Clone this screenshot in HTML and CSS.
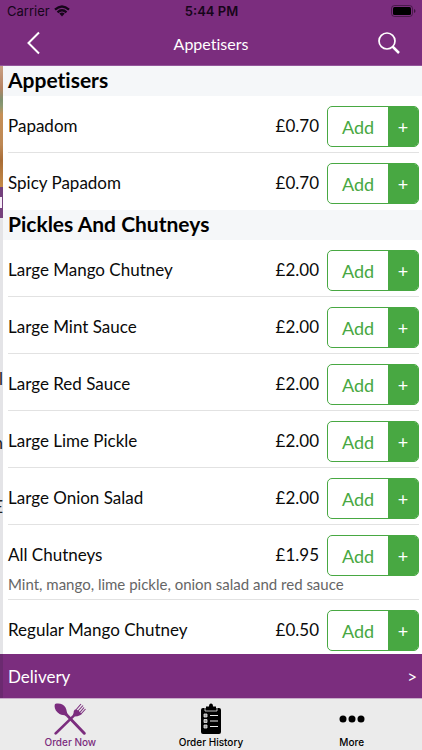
FILE: index.html
```html
<!DOCTYPE html>
<html lang="en">
<head>
<meta charset="utf-8">
<meta name="viewport" content="width=device-width, initial-scale=1">
<title>Appetisers</title>
<link rel="stylesheet" href="styles.css">
</head>
<body>
<header class="top">
  <div class="status">
    <span class="carrier">Carrier
      <svg class="wifi" viewBox="0 0 16 12" width="16" height="12" aria-hidden="true"><g fill="none" stroke="currentColor" stroke-width="2.3"><path d="M1 4.7Q8-1.7 15 4.7"/><path d="M3.5 7.3Q8 3.2 12.500 7.300"/></g><path fill="currentColor" d="M5.300 8.600Q8 6.600 10.700 8.600L8 11.500z"/></svg>
    </span>
    <span class="clock">5:44 PM</span>
    <svg class="battery" viewBox="0 0 25 12" width="25" height="12" aria-hidden="true"><rect x=".5" y=".5" width="21" height="11" rx="3" fill="none" stroke="#000" opacity=".4"/><rect x="2" y="2" width="18" height="8" rx="1.500" fill="#000"/><path d="M23 4v4q1.500-.5 1.500-2T23 4z" fill="#000" opacity=".5"/></svg>
  </div>
  <div class="nav">
    <button class="icon-button" type="button" aria-label="Back"><svg viewBox="0 0 14 24" width="14" height="24"><path d="M13 1.500 2.500 12 13 22.500" fill="none" stroke="#fff" stroke-width="2"/></svg></button>
    <h1>Appetisers</h1>
    <button class="icon-button" type="button" aria-label="Search"><svg viewBox="0 0 22 22" width="22" height="22"><circle cx="9" cy="9" r="8" fill="none" stroke="#fff" stroke-width="1.700"/><path d="m14.500 14.500 6.500 6.500" stroke="#fff" stroke-width="2.500"/></svg></button>
  </div>
</header>
<div class="content">
  <div class="behind" aria-hidden="true">
    <div class="photo"></div>
    <div class="banner"><i></i></div>
    <div class="sheet"><span>l</span><span>n</span><span>E</span></div>
    <div class="foot"></div>
  </div>
  <div class="panel">
    <main class="menu">
      <h2>Appetisers</h2>
      <ul>
        <li><span class="name">Papadom</span><span class="price">£0.70</span><span class="add"><button type="button">Add</button><button type="button" class="plus">+</button></span></li>
        <li><span class="name">Spicy Papadom</span><span class="price">£0.70</span><span class="add"><button type="button">Add</button><button type="button" class="plus">+</button></span></li>
      </ul>
      <h2>Pickles And Chutneys</h2>
      <ul>
        <li><span class="name">Large Mango Chutney</span><span class="price">£2.00</span><span class="add"><button type="button">Add</button><button type="button" class="plus">+</button></span></li>
        <li><span class="name">Large Mint Sauce</span><span class="price">£2.00</span><span class="add"><button type="button">Add</button><button type="button" class="plus">+</button></span></li>
        <li><span class="name">Large Red Sauce</span><span class="price">£2.00</span><span class="add"><button type="button">Add</button><button type="button" class="plus">+</button></span></li>
        <li><span class="name">Large Lime Pickle</span><span class="price">£2.00</span><span class="add"><button type="button">Add</button><button type="button" class="plus">+</button></span></li>
        <li><span class="name">Large Onion Salad</span><span class="price">£2.00</span><span class="add"><button type="button">Add</button><button type="button" class="plus">+</button></span></li>
        <li><span class="name">All Chutneys</span><span class="price">£1.95</span><span class="add"><button type="button">Add</button><button type="button" class="plus">+</button></span><p>Mint, mango, lime pickle, onion salad and red sauce</p></li>
        <li><span class="name">Regular Mango Chutney</span><span class="price">£0.50</span><span class="add"><button type="button">Add</button><button type="button" class="plus">+</button></span></li>
      </ul>
    </main>
    <button class="delivery" type="button"><span>Delivery</span><span>&gt;</span></button>
  </div>
</div>
<nav class="tabs">
  <a href="#order" class="active">
    <svg viewBox="0 0 32 32" width="32" height="32" aria-hidden="true"><g fill="currentColor"><path d="M1 1C5-.3 9.500 1 11.500 4.500c1.500 2.700 1 5 2.300 6.500L31.500 29.500q.7 1.200-.3 2-1 .7-2-.3L12 13.200C10 11.500 8 12.500 5.500 11 1.500 8.500-.3 4.500 1 1z"/><path d="M.7 29.500 18.800 12q1-1.500 1-4L21 6.500l3.500 1 3 3.500-1.500 1.200q-2.500 1.300-5.200 1.300L2.700 31.300q-1.200.8-2 0-.8-.8 0-1.800z"/></g><path d="m21 8 6-7M23 9l6-6.500M25 10.500l5-6M26.500 11.500 31.500 6" fill="none" stroke="currentColor" stroke-width="1.100"/></svg>
    <span>Order Now</span>
  </a>
  <a href="#history">
    <svg viewBox="0 0 32 32" width="32" height="32" aria-hidden="true"><path fill="currentColor" d="M8 5h3V3.500h3q0-3 2-3t2 3h3V5h3q2 0 2 2v22q0 2-2 2H8q-2 0-2-2V7q0-2 2-2z"/><path d="M10 5v3h12V5" fill="none" stroke="#ebebeb" stroke-width=".8"/><path d="M15 12.500h8M15 18h8M15 23.500h8" stroke="#ebebeb" stroke-width="1.200"/><path d="M9 11h3v3H9zM9 16.500h3v3H9zM9 22h3v3H9z" fill="#999" stroke="#ebebeb" stroke-width=".8"/></svg>
    <span>Order History</span>
  </a>
  <a href="#more">
    <svg viewBox="0 0 32 32" width="32" height="32" aria-hidden="true"><g fill="currentColor"><circle cx="7" cy="16" r="3.500"/><circle cx="16" cy="16" r="3.500"/><circle cx="25" cy="16" r="3.500"/></g></svg>
    <span>More</span>
  </a>
</nav>
</body>
</html>
```
FILE: styles.css
```css
* { box-sizing: border-box; }
body { margin: 0; height: 100vh; display: flex; flex-direction: column; overflow: hidden; background: #fff; color: #0a0a0a; font-family: Lato, "Open Sans", sans-serif; font-variant-ligatures: none; }
button { font: inherit; border: 0; padding: 0; background: none; color: inherit; cursor: pointer; }
h1, h2, ul, p { margin: 0; padding: 0; }

.top { flex: none; background: #7b2d7e; border-bottom: 1px solid #93569a; }
.status { height: 21px; padding: 0 6px 0 7px; display: grid; grid-template-columns: 1fr auto 1fr; align-items: center; font: 13px/20px Inter, sans-serif; color: #16051a; }
.carrier { display: flex; align-items: center; gap: 4px; }
.clock { font-weight: 600; }
.battery { justify-self: end; }
.nav { height: 44px; padding: 0 20px; display: grid; grid-template-columns: 1fr auto 1fr; align-items: center; color: #fff; }
.nav h1 { font-size: 16px; font-weight: 400; }
.icon-button { width: 26px; height: 32px; display: grid; place-items: center; }
.icon-button:last-child { justify-self: end; }

.content { flex: 1; min-height: 0; display: flex; }
.behind { flex: none; width: 3px; overflow: hidden; display: flex; flex-direction: column; background: #e4e4e7; }
.photo { height: 121px; background: linear-gradient(#c9a184, #b78363 18%, #7f9170 28%, #8b9972 33%, #c68f56 40%, #bd8854 65%, #a96d37 78%, #c58b48); }
.banner { height: 31px; padding-top: 10px; background: #74407c; }
.banner i { display: block; width: 2px; height: 11px; background: #f7eef8; }
.sheet { flex: 1; padding-top: 129px; display: flex; flex-direction: column; align-items: flex-end; font-size: 17px; line-height: 64px; color: #222; }
.foot { height: 44px; background: #6b2a70; }

.panel { flex: 1; min-width: 0; display: flex; flex-direction: column; }
.menu { flex: 1; min-height: 0; overflow: hidden; }
.menu h2 { height: 30px; padding-left: 5px; background: #f5f7f9; font-size: 21px; line-height: 28px; font-weight: 700; color: #000; }
.menu ul { list-style: none; padding: 0 3px 0 5px; }
.menu li { display: grid; grid-template-columns: 1fr auto 92px; column-gap: 8px; align-items: start; padding-top: 10px; min-height: 57px; align-content: start; border-bottom: 1px solid #e2e2e2; }
.menu li:last-child { border-bottom: 0; }
.name, .price { font-size: 17px; line-height: 40px; }
.add { height: 41px; display: grid; grid-template-columns: 1fr 30px; border: 1px solid #48a842; border-radius: 5px; overflow: hidden; color: #48a842; font-size: 18px; }
.plus { background: #48a842; color: #fff; }
.menu p { grid-column: 1 / -1; padding-bottom: 6px; font-size: 15px; line-height: 17px; color: #666; }
.delivery { flex: none; height: 44px; padding: 0 5px; display: flex; align-items: center; justify-content: space-between; background: #7b2d7e; color: #fff; font-size: 17px; }

.tabs { flex: none; height: 52px; display: grid; grid-template-columns: repeat(3, 1fr); background: #ebebeb; border-top: 1px solid #c9adca; }
.tabs a { display: flex; flex-direction: column; align-items: center; padding-top: 4px; color: #000; text-decoration: none; font: 500 10px/14px Inter, sans-serif; }
.tabs .active { color: #7b2d7e; }
```
